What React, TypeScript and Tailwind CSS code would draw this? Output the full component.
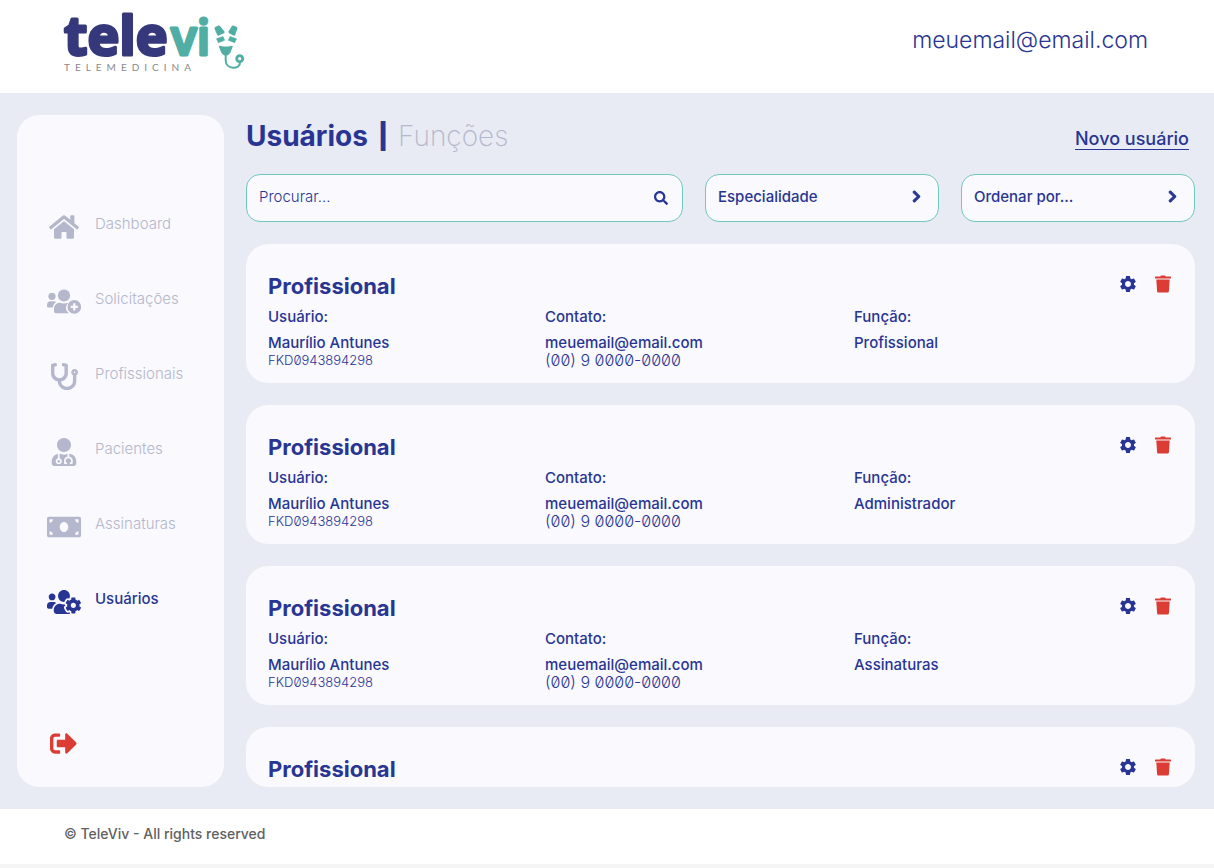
import { useState } from "react";
import type { ReactNode } from "react";
import {
  FaChevronRight,
  FaHome,
  FaMoneyBill,
  FaSearch,
  FaSignOutAlt,
  FaStethoscope,
  FaUserMd,
  FaUsersCog,
} from "react-icons/fa";
import { MdSettings } from "react-icons/md";

function Logo() {
  return (
    <svg width="186" height="78" viewBox="-2 -14 186 78" role="img" aria-label="televiv telemedicina">
      <g
        fontFamily='"Open Sans", sans-serif'
        strokeWidth="3"
        strokeLinejoin="round"
      >
        <text x="0" y="41" fontSize="54" fontWeight="700" fill="#35387b" stroke="#35387b">
          tele
        </text>
        <text x="107" y="41" fontSize="48" fontWeight="600" fill="#50aea4" stroke="#50aea4">
          vi
        </text>
      </g>
      <text x="0" y="57" fontFamily="Lato, sans-serif" fontSize="10" letterSpacing="5" fill="#8a8a8a">
        TELEMEDICINA
      </text>
      <g fill="#50aea4" stroke="#50aea4" strokeLinejoin="round">
        <path d="M151.800 14.300l3.200-1.500 4.300 5.200-5 2.300zM172.200 14.300l-3.200-1.500-3.300 5.200 4.300 2.300z" strokeWidth="2.600" />
        <path d="M152.500 24.800l6.500-2.300 1.600 3.800-6.200 2.400zM172.500 24.800l-6.500-2.300-1.600 3.800 6.200 2.400z" strokeWidth=".6" />
        <path d="M155.300 32.200c4.200 1.200 8.800 1.200 13 0l-2.300 6.100c-1.500 3.800-6.900 3.800-8.400 0z" strokeWidth="1" />
      </g>
      <g fill="none" stroke="#50aea4">
        <path d="M161.700 40v6.500c0 9.500 15 9.500 14.300 1.500" strokeWidth="2" />
        <circle cx="175.700" cy="44.700" r="3" strokeWidth="2.800" />
      </g>
    </svg>
  );
}

function UsersPlusIcon() {
  return (
    <svg width="34" height="25" viewBox="0 0 34 25" fill="currentColor" aria-hidden="true">
      <circle cx="5" cy="7.300" r="3.600" />
      <path d="M3.500 12.200h3.200c1 0 1.800.3 2.500.9-1.900 1.100-3.100 2.900-3.400 5.400H1.200C.5 18.500 0 18 0 17.300v-1.600c0-1.900 1.600-3.500 3.500-3.500z" />
      <circle cx="17" cy="6.500" r="6.100" />
      <path d="M12.800 13.700c2.700 1 5.700 1 8.400 0-3.200 3.600-3 8 .9 10.600H9c-1.200 0-2-.9-2-2v-2.200c0-3.700 2.500-6.400 5.800-6.400z" />
      <path
        fillRule="evenodd"
        d="M27.300 11.100a6.800 6.800 0 1 1 0 13.600 6.800 6.800 0 0 1 0-13.600zm-1.100 3.200v2.500h-2.500v2.200h2.500v2.500h2.200V19h2.500v-2.200h-2.500v-2.500z"
      />
    </svg>
  );
}

function TrashIcon() {
  return (
    <svg width="16" height="18" viewBox="0 0 16 18" fill="currentColor" aria-hidden="true">
      <path d="M.6 1.500h4.600L6 .5h4l.8 1h4.600c.4 0 .6.200.6.600v.8c0 .4-.2.600-.6.600H.6C.2 3.500 0 3.300 0 2.900v-.8c0-.4.2-.6.600-.6z" />
      <path d="M1.300 4.500h13.400l-.8 11.700c-.1.800-.6 1.300-1.400 1.300h-9c-.8 0-1.300-.5-1.400-1.300z" />
    </svg>
  );
}

const navItems: { label: string; icon: ReactNode; active?: boolean }[] = [
  { label: "Dashboard", icon: <FaHome size={30} /> },
  { label: "Solicitações", icon: <UsersPlusIcon /> },
  { label: "Profissionais", icon: <FaStethoscope size={27} /> },
  { label: "Pacientes", icon: <FaUserMd size={28} /> },
  { label: "Assinaturas", icon: <FaMoneyBill size={34} /> },
  { label: "Usuários", icon: <FaUsersCog size={34} />, active: true },
];

const users = [
  { id: 1, role: "Profissional" },
  { id: 2, role: "Administrador" },
  { id: 3, role: "Assinaturas" },
  { id: 4, role: "Profissional" },
];

function Sidebar() {
  return (
    <aside className="flex w-[207px] shrink-0 flex-col rounded-[22px] bg-[#f9f9fe] px-[30px] pt-[74px] pb-[30px]">
      <nav className="flex flex-col">
        {navItems.map((item) => (
          <a
            key={item.label}
            href="#"
            className={
              item.active
                ? "flex h-[75px] items-center gap-[14px] text-[15px] font-medium text-[#283593]"
                : "flex h-[75px] items-center gap-[14px] text-[15px] font-light text-[#b5b7cc]"
            }
          >
            <span className="flex w-[34px] shrink-0 justify-center">{item.icon}</span>
            <span className="pb-1">{item.label}</span>
          </a>
        ))}
      </nav>
      <button type="button" aria-label="Sair" className="mt-auto ml-[3px] w-fit text-[#db3c34]">
        <FaSignOutAlt size={27} />
      </button>
    </aside>
  );
}

function FilterSelect({ label }: { label: string }) {
  return (
    <div className="relative w-[234px] shrink-0">
      <select
        aria-label={label}
        className="h-12 w-full appearance-none rounded-[14px] border border-[#6fc7c0] bg-[#f9f9fe] px-3 pb-0.5 text-[15px] font-medium text-[#283593]"
      >
        <option>{label}</option>
      </select>
      <FaChevronRight
        size={13}
        strokeWidth={40}
        className="pointer-events-none absolute top-4 right-4 text-[#283593]"
      />
    </div>
  );
}

function UserCard({ role }: { role: string }) {
  return (
    <li className="shrink-0 rounded-[22px] bg-[#f9f9fe] px-[22px] pt-[26px] pb-[15px]">
      <div className="flex items-center justify-between">
        <h2 className="text-[22px] leading-8 font-bold">Profissional</h2>
        <div className="flex items-center gap-[17px] pr-0.5 pb-1">
          <button type="button" aria-label="Configurar usuário">
            <MdSettings size={20} />
          </button>
          <button type="button" aria-label="Excluir usuário" className="text-[#db3c34]">
            <TrashIcon />
          </button>
        </div>
      </div>
      <div className="mt-1.5 grid grid-cols-[277fr_309fr_319fr] text-[15px] leading-[18px] font-medium">
        <div>
          <p className="mb-2">Usuário:</p>
          <p>Maurílio Antunes</p>
          <p className="text-[13px] leading-4 font-light slashed-zero">FKD0943894298</p>
        </div>
        <div>
          <p className="mb-2">Contato:</p>
          <p>meuemail@email.com</p>
          <p className="text-[16px] leading-4 font-light slashed-zero">(00) 9 0000-0000</p>
        </div>
        <div>
          <p className="mb-2">Função:</p>
          <p>{role}</p>
        </div>
      </div>
    </li>
  );
}

export default function App() {
  const [query, setQuery] = useState("");

  return (
    <div className="flex h-screen flex-col bg-[#f5f5f5] pb-1 font-['Inter',sans-serif] text-[#283593]">
      <header className="flex shrink-0 items-start justify-between bg-white pr-[66px] pb-[15px] pl-[62px]">
        <Logo />
        <p className="pt-[22px] text-[23px] leading-9 font-light">meuemail@email.com</p>
      </header>

      <div className="flex min-h-0 flex-1 gap-[22px] bg-[#e8ebf4] py-[22px] pr-[19px] pl-[17px]">
        <Sidebar />
        <main className="flex min-w-0 flex-1 flex-col">
          <div className="flex h-[59px] shrink-0 items-start justify-between pr-1.5">
            <h1 className="flex gap-2.5 text-[28px] leading-[42px] font-bold">
              <span>Usuários</span>
              <span className="text-[25px] font-black">|</span>
              <a href="#" className="font-extralight text-[#b5b7cc]">
                Funções
              </a>
            </h1>
            <a href="#" className="pt-3 text-[18px] leading-6 font-medium underline underline-offset-4">
              Novo usuário
            </a>
          </div>

          <div className="flex shrink-0 gap-[22px]">
            <div className="relative min-w-0 flex-1">
              <input
                type="text"
                aria-label="Procurar"
                placeholder="Procurar..."
                value={query}
                onChange={(event) => setQuery(event.target.value)}
                className="h-12 w-full rounded-[14px] border border-[#6fc7c0] bg-[#f9f9fe] px-3 pb-1 text-[15px] font-light placeholder:text-[#283593]"
              />
              <button type="button" aria-label="Buscar" className="absolute top-[17px] right-[15px]">
                <FaSearch size={14} />
              </button>
            </div>
            <FilterSelect label="Especialidade" />
            <FilterSelect label="Ordenar por..." />
          </div>

          <ul className="mt-[22px] flex min-h-0 flex-1 flex-col gap-[22px] overflow-y-auto rounded-[22px] [scrollbar-width:none]">
            {users.map((user) => (
              <UserCard key={user.id} role={user.role} />
            ))}
          </ul>
        </main>
      </div>

      <footer className="shrink-0 bg-white px-16 pt-[15px] pb-5 text-[14px] leading-5 font-medium text-[#616161]">
        © TeleViv - All rights reserved
      </footer>
    </div>
  );
}
